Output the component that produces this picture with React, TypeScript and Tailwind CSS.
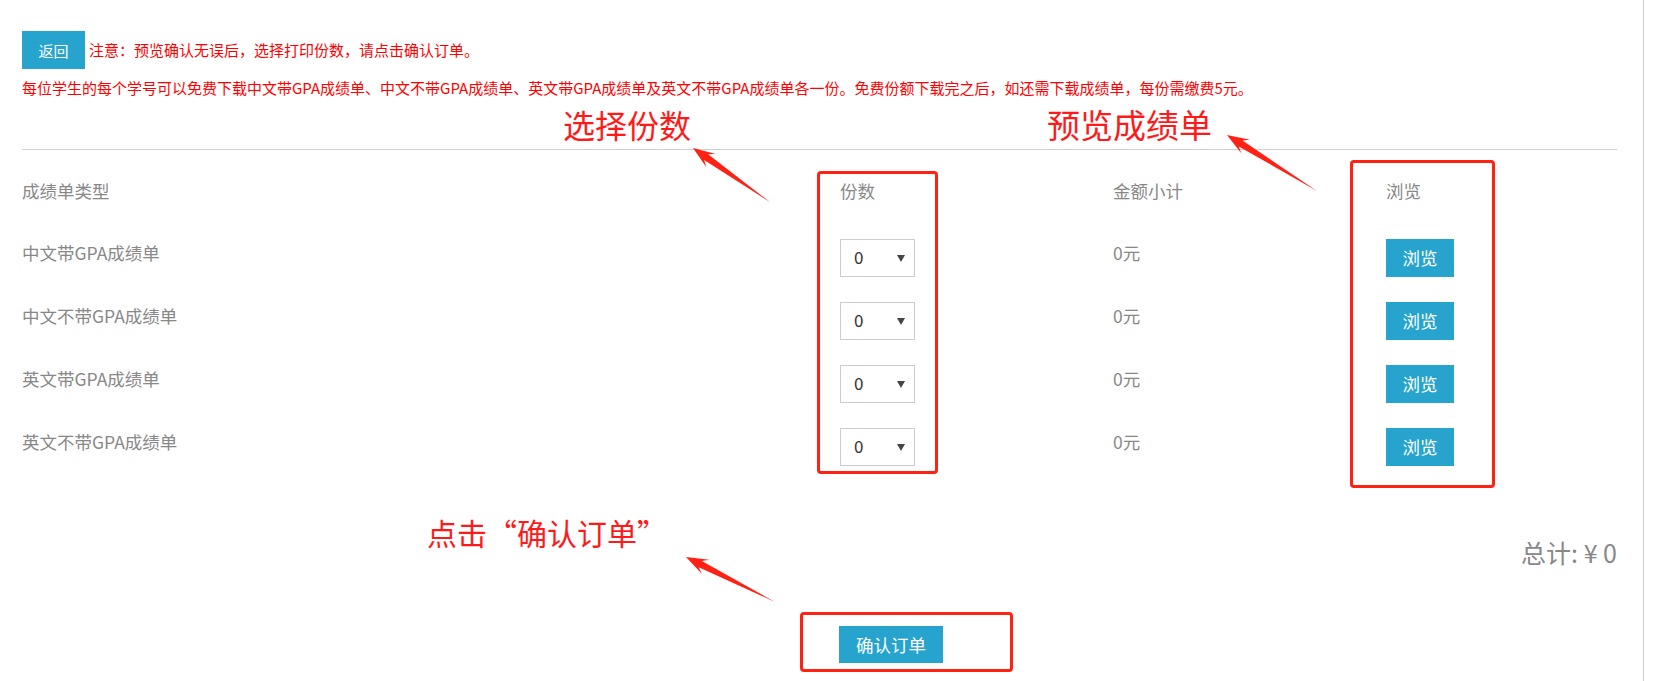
import React from 'react';

const rows = ['中文带GPA成绩单', '中文不带GPA成绩单', '英文带GPA成绩单', '英文不带GPA成绩单'];

function arrowPoints(tx: number, ty: number, px: number, py: number) {
  const dx = px - tx;
  const dy = py - ty;
  const len = Math.hypot(dx, dy);
  const ux = dx / len;
  const uy = dy / len;
  const nx = -uy;
  const ny = ux;
  const pt = (a: number, b: number) => `${px - ux * a + nx * b},${py - uy * a + ny * b}`;
  return [`${px},${py}`, pt(22, 8), pt(16, 3.5), `${tx},${ty}`, pt(16, -3.5), pt(22, -8)].join(' ');
}

function Select() {
  return (
    <div className="w-[75px] h-[38px] border border-[#ccc] bg-white flex items-center justify-between pl-[13px] pr-[9px]">
      <span className="-mt-[3px] text-[17px] leading-none text-[#333]">0</span>
      <svg width="8" height="7" viewBox="0 0 8 7">
        <polygon points="0,0 8,0 4,7" fill="#444" />
      </svg>
    </div>
  );
}

export default function App() {
  return (
    <div className="relative w-[1644px] min-h-[681px] border-r border-[#d0d0d0] bg-white pl-[22px] pr-[26px] pt-[31px] font-['Noto_Sans_CJK_SC','Microsoft_YaHei',sans-serif]">
      <div className="flex items-center gap-[4px]">
        <button className="w-[63px] h-[38px] bg-[#27a4cd] text-white text-[15px] leading-none">返回</button>
        <p className="text-[15px] leading-[20px] text-[#ff0000]">注意：预览确认无误后，选择打印份数，请点击确认订单。</p>
      </div>
      <p className="mt-[9px] text-[15px] leading-[20px] text-[#ff0000] whitespace-nowrap">
        每位学生的每个学号可以免费下载中文带GPA成绩单、中文不带GPA成绩单、英文带GPA成绩单及英文不带GPA成绩单各一份。免费份额下载完之后，如还需下载成绩单，每份需缴费5元。
      </p>
      <div className="mt-[51px] h-px bg-[#cfcfcf]" />

      <div className="mt-[27px] text-[#888] text-[17.5px] leading-[28px]">
        <div className="grid grid-cols-[818px_273px_273px_1fr]">
          <div>成绩单类型</div>
          <div>份数</div>
          <div>金额小计</div>
          <div>浏览</div>
        </div>
        <div className="mt-[34px] flex flex-col gap-[25px]">
          {rows.map((r) => (
            <div key={r} className="grid grid-cols-[818px_273px_273px_1fr] items-start">
              <div>{r}</div>
              <Select />
              <div>0元</div>
              <button className="w-[68px] h-[38px] bg-[#27a4cd] text-white text-[17.5px] leading-none">浏览</button>
            </div>
          ))}
        </div>
      </div>

      <div className="mt-[70px] text-right text-[25px] leading-[32px] text-[#888]">总计: ¥ 0</div>

      <div className="mt-[58px] ml-[817px] pb-[17px]">
        <button className="w-[104px] h-[37px] bg-[#27a4cd] text-white text-[17.5px] leading-none">确认订单</button>
      </div>

      {/* annotations */}
      <div className="absolute left-[563px] top-[104px] text-[32px] leading-[40px] text-[#ff1a1a]">选择份数</div>
      <div className="absolute left-[1047px] top-[104px] text-[33px] leading-[40px] text-[#ff1a1a]">预览成绩单</div>
      <div className="absolute left-[427px] top-[512px] text-[30px] leading-[40px] text-[#ff1a1a]">点击“确认订单”</div>

      <div className="absolute left-[817px] top-[171px] w-[121px] h-[303px] border-[3px] border-[#ff2214] rounded-[4px]" />
      <div className="absolute left-[1350px] top-[160px] w-[145px] h-[328px] border-[3px] border-[#ff2214] rounded-[4px]" />
      <div className="absolute left-[800px] top-[612px] w-[213px] h-[60px] border-[3px] border-[#ff2214] rounded-[4px]" />

      <svg className="absolute left-0 top-0 pointer-events-none" width="1659" height="681">
        <polygon points={arrowPoints(770, 202, 693, 148)} fill="#ff2214" />
        <polygon points={arrowPoints(1317, 191, 1227, 135)} fill="#ff2214" />
        <polygon points={arrowPoints(775, 602, 686, 557)} fill="#ff2214" />
      </svg>
    </div>
  );
}
